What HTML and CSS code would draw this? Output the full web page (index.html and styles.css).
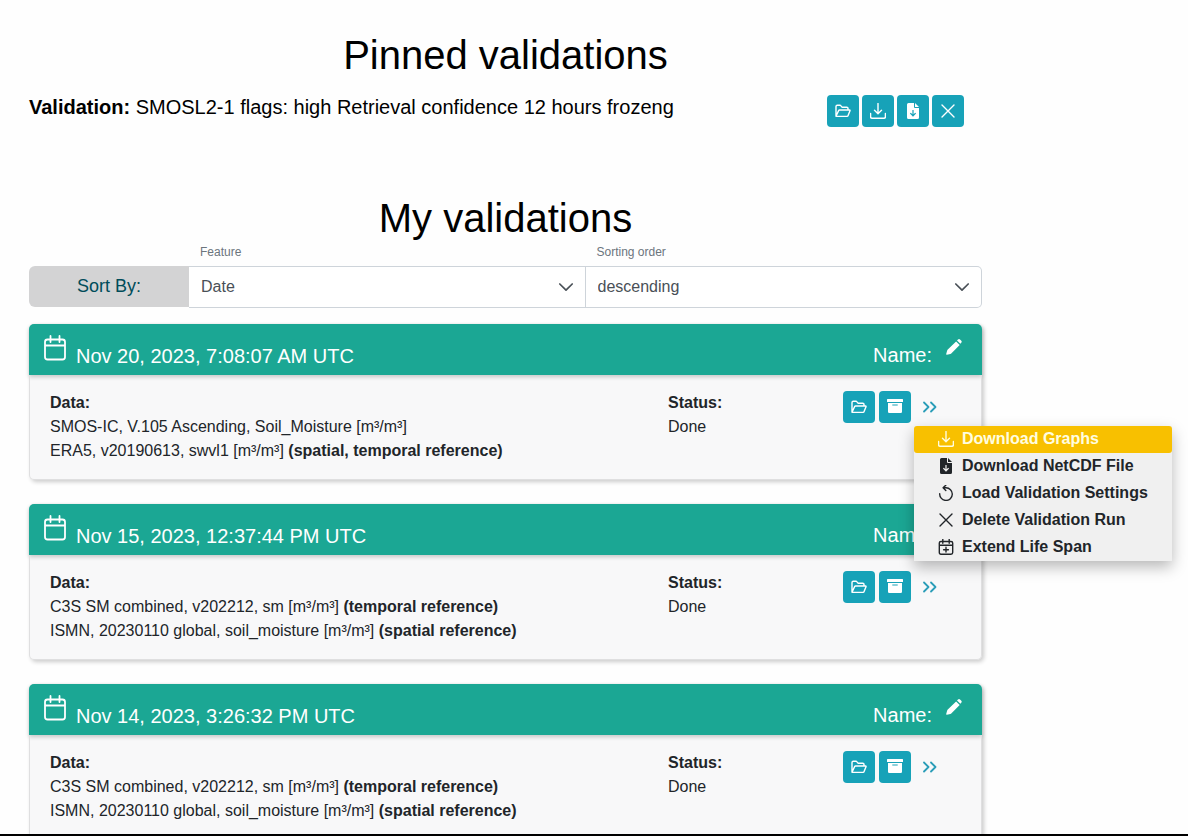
FILE: index.html
```html
<!DOCTYPE html>
<html lang="en">
<head>
<meta charset="utf-8">
<title>My validations</title>
<link rel="stylesheet" href="styles.css">
</head>
<body>
<svg class="sprite" aria-hidden="true">
  <symbol id="folder" viewBox="0 0 16 16"><path d="M1 13V3.5Q1 2.2 2.3 2.2h2.5q.8 0 1.2.6l1 1.4h4.7Q13 4.200 13 5.500V7M1 13.300 3.600 7.600q.3-.6 1-.6h9.900q.8 0 .5.8l-2 5q-.2.6-.9.6H1.600Q1 13.400 1 13z"/></symbol>
  <symbol id="download" viewBox="0 0 16 16"><path d="M8 .5v10M4.500 7.200 8 10.700l3.500-3.500M.6 10.500v3.300q0 1.500 1.500 1.500h11.800q1.500 0 1.500-1.500v-3.300"/></symbol>
  <symbol id="file" viewBox="0 0 16 16"><path class="solid" d="M3.500 0H9v4q0 1 1 1h4v9.500q0 1.500-1.500 1.500h-9Q2 16 2 14.500v-13Q2 0 3.500 0zM10 0l4 4h-4zM7.400 7v4.300L5.800 9.700l-.9.9L8 13.700l3.100-3.100-.9-.9-1.600 1.600V7z"/></symbol>
  <symbol id="close" viewBox="0 0 16 16"><path d="m2 2 12 12M14 2 2 14"/></symbol>
  <symbol id="archive" viewBox="0 0 16 16"><path class="solid" fill-rule="evenodd" d="M.6 0h14.800q.6 0 .6.6v2.400H0V.6Q0 0 .6 0zM1 4h14v8.800q0 1.200-1.200 1.200H2.200Q1 14 1 12.800zM5.300 5.500v1.100h5.400V5.500z"/></symbol>
  <symbol id="calendar" viewBox="0 0 24 26"><path d="M4.500 4.500h15q2.500 0 2.500 2.500v15q0 2.500-2.500 2.500h-15Q2 24.500 2 22V7q0-2.500 2.500-2.500zM2 10.500h20M7.500 1v6M16.500 1v6"/></symbol>
  <symbol id="pencil" viewBox="0 0 16 16"><path class="solid" d="M10.100 2.400 1.800 10.500Q1.300 11 1.100 11.700L.2 15q-.2.800.7.700l3.400-.8q.7-.2 1.200-.7l8.200-8.200zM11 1.600l1-1q1-.9 2-.1l1.300 1.300q.9 1-.1 2l-.8.9z"/></symbol>
  <symbol id="more" viewBox="0 0 16 16"><path d="m2 3.500 4.500 4.500L2 12.500M9 3.500 13.500 8 9 12.500"/></symbol>
  <symbol id="reload" viewBox="0 0 16 16"><path d="M1.700 8.800A6.300 6.300 0 1 0 8 2.800H5.300M7.800.2 5.100 2.800l2.700 2.700"/></symbol>
  <symbol id="extend" viewBox="0 0 16 16"><path d="M3 2.500h10q1.700 0 1.700 1.500v9.500q0 1.700-1.700 1.700H3q-1.700 0-1.700-1.700V4Q1.300 2.500 3 2.500zM1.300 6.300h13.400M4.800.3v4M11.200.3v4M8 8.300v4.800M5.600 10.700h4.800"/></symbol>
  <symbol id="down" viewBox="0 0 16 16"><path d="m1.800 5 6.200 6.200L14.200 5"/></symbol>
</svg>

<main class="page">
  <section class="pinned">
    <h1 class="title">Pinned validations</h1>
    <div class="pinned-row">
      <p class="pinned-name"><b>Validation:</b> SMOSL2-1 flags: high Retrieval confidence 12 hours frozeng</p>
      <div class="pinned-actions">
        <button class="btn" aria-label="Open"><svg class="icon"><use href="#folder"/></svg></button>
        <button class="btn" aria-label="Download graphs"><svg class="icon"><use href="#download"/></svg></button>
        <button class="btn" aria-label="Download NetCDF file"><svg class="icon"><use href="#file"/></svg></button>
        <button class="btn" aria-label="Unpin"><svg class="icon"><use href="#close"/></svg></button>
      </div>
    </div>
  </section>

  <section class="mine">
    <h1 class="title">My validations</h1>
    <div class="sort">
      <div class="sort-title">Sort By:</div>
      <div class="field">
        <label class="field-label" for="feature">Feature</label>
        <div class="select-wrap">
          <select class="select" id="feature"><option>Date</option><option>Name</option></select>
          <svg class="icon arrow"><use href="#down"/></svg>
        </div>
      </div>
      <div class="field last">
        <label class="field-label" for="order">Sorting order</label>
        <div class="select-wrap">
          <select class="select" id="order"><option>descending</option><option>ascending</option></select>
          <svg class="icon arrow"><use href="#down"/></svg>
        </div>
      </div>
    </div>

    <article class="card">
      <header class="card-head">
        <svg class="icon calendar"><use href="#calendar"/></svg>
        <h2 class="date">Nov 20, 2023, 7:08:07 AM UTC</h2>
        <span class="name">Name:</span>
        <button class="edit" aria-label="Edit name"><svg class="icon"><use href="#pencil"/></svg></button>
      </header>
      <div class="card-body">
        <div class="data"><b>Data:</b><br>SMOS-IC, V.105 Ascending, Soil_Moisture [m³/m³]<br>ERA5, v20190613, swvl1 [m³/m³] <b>(spatial, temporal reference)</b></div>
        <div class="status"><b>Status:</b><br>Done</div>
        <div class="actions">
          <button class="btn" aria-label="Open"><svg class="icon"><use href="#folder"/></svg></button>
          <button class="btn" aria-label="Archive"><svg class="icon"><use href="#archive"/></svg></button>
          <div class="more-wrap">
            <button class="more" aria-label="More actions" aria-expanded="true"><svg class="icon"><use href="#more"/></svg></button>
            <div class="menu">
              <button class="menu-item active"><svg class="icon"><use href="#download"/></svg>Download Graphs</button>
              <button class="menu-item"><svg class="icon"><use href="#file"/></svg>Download NetCDF File</button>
              <button class="menu-item"><svg class="icon"><use href="#reload"/></svg>Load Validation Settings</button>
              <button class="menu-item"><svg class="icon"><use href="#close"/></svg>Delete Validation Run</button>
              <button class="menu-item"><svg class="icon"><use href="#extend"/></svg>Extend Life Span</button>
            </div>
          </div>
        </div>
      </div>
    </article>

    <article class="card">
      <header class="card-head">
        <svg class="icon calendar"><use href="#calendar"/></svg>
        <h2 class="date">Nov 15, 2023, 12:37:44 PM UTC</h2>
        <span class="name">Name:</span>
        <button class="edit" aria-label="Edit name"><svg class="icon"><use href="#pencil"/></svg></button>
      </header>
      <div class="card-body">
        <div class="data"><b>Data:</b><br>C3S SM combined, v202212, sm [m³/m³] <b>(temporal reference)</b><br>ISMN, 20230110 global, soil_moisture [m³/m³] <b>(spatial reference)</b></div>
        <div class="status"><b>Status:</b><br>Done</div>
        <div class="actions">
          <button class="btn" aria-label="Open"><svg class="icon"><use href="#folder"/></svg></button>
          <button class="btn" aria-label="Archive"><svg class="icon"><use href="#archive"/></svg></button>
          <button class="more" aria-label="More actions"><svg class="icon"><use href="#more"/></svg></button>
        </div>
      </div>
    </article>

    <article class="card">
      <header class="card-head">
        <svg class="icon calendar"><use href="#calendar"/></svg>
        <h2 class="date">Nov 14, 2023, 3:26:32 PM UTC</h2>
        <span class="name">Name:</span>
        <button class="edit" aria-label="Edit name"><svg class="icon"><use href="#pencil"/></svg></button>
      </header>
      <div class="card-body">
        <div class="data"><b>Data:</b><br>C3S SM combined, v202212, sm [m³/m³] <b>(temporal reference)</b><br>ISMN, 20230110 global, soil_moisture [m³/m³] <b>(spatial reference)</b></div>
        <div class="status"><b>Status:</b><br>Done</div>
        <div class="actions">
          <button class="btn" aria-label="Open"><svg class="icon"><use href="#folder"/></svg></button>
          <button class="btn" aria-label="Archive"><svg class="icon"><use href="#archive"/></svg></button>
          <button class="more" aria-label="More actions"><svg class="icon"><use href="#more"/></svg></button>
        </div>
      </div>
    </article>
  </section>
</main>
</body>
</html>
```

FILE: styles.css
```css
* { box-sizing: border-box; }

body {
  margin: 0;
  background: #fefefe;
  color: #212529;
  font: 16px/24px "Liberation Sans", Arial, sans-serif;
}

button {
  margin: 0;
  padding: 0;
  border: 0;
  background: none;
  color: inherit;
  font: inherit;
  cursor: pointer;
}

.sprite { position: absolute; width: 0; height: 0; }

.page {
  height: 100vh;
  padding: 31px 206px 0 29px;
  overflow-y: auto;
  scrollbar-width: none;
  border-bottom: 2px solid #000;
}

.icon {
  display: block;
  flex: none;
  width: 16px;
  height: 16px;
  fill: none;
  stroke: currentColor;
  stroke-width: 1.4;
  stroke-linecap: round;
  stroke-linejoin: round;
}
.solid { fill: currentColor; fill-rule: evenodd; stroke: none; }

.title {
  margin: 0;
  color: #000;
  font-size: 40px;
  font-weight: 400;
  line-height: 48px;
  text-align: center;
}

.pinned { margin-bottom: 67px; }
.pinned-row {
  display: flex;
  justify-content: space-between;
  padding: 16px 18px 0 0;
}
.pinned-name { margin: 0; color: #000; font-size: 20px; }
.pinned-actions { display: flex; gap: 3px; }

.btn {
  display: flex;
  align-items: center;
  justify-content: center;
  width: 32px;
  height: 32px;
  border-radius: 4px;
  background: #17a2b8;
  color: #fff;
}

.sort {
  display: grid;
  grid-template-columns: 160px 1fr 1fr;
  align-items: end;
  margin-bottom: 16px;
}
.sort-title {
  height: 41px;
  margin-bottom: 1px;
  border-radius: 6px 0 0 6px;
  background: #d3d3d4;
  color: #004c5a;
  font-size: 18px;
  line-height: 41px;
  text-align: center;
}
.field-label {
  display: block;
  padding: 1px 11px 5px;
  color: #6c757d;
  font-size: 12px;
  line-height: 18px;
}
.select-wrap { position: relative; }
.select {
  display: block;
  width: 100%;
  height: 42px;
  padding: 0 40px 0 12px;
  appearance: none;
  border: 1px solid #ced4da;
  border-left-width: 0;
  border-radius: 0;
  background: #fff;
  color: #495057;
  font: inherit;
}
.last .select { border-radius: 0 5px 5px 0; }
.arrow {
  position: absolute;
  top: 13px;
  right: 12px;
  color: #495057;
  stroke-width: 1.7;
  pointer-events: none;
}

.card {
  margin-bottom: 24px;
  border-radius: 5px;
  background: #f8f8f9;
  box-shadow: 2px 2px 4px rgba(0, 0, 0, 0.2);
}
.card-head {
  display: flex;
  height: 51px;
  padding: 11px 20px 0 14px;
  border-radius: 5px 5px 0 0;
  background: #1ba794;
  box-shadow: 0 2px 4px rgba(0, 0, 0, 0.2);
  color: #fff;
  font-size: 20px;
}
.calendar { width: 24px; height: 26px; stroke-width: 1.8; }
.date {
  flex: 1;
  margin: 0;
  padding: 9px 0 0 9px;
  font-size: 20px;
  font-weight: 400;
}
.name { padding: 8px 14px 0 0; }
.edit { align-self: flex-start; padding-top: 4px; }

.card-body {
  display: grid;
  grid-template-columns: 1fr 175px 119px;
  padding: 16px 19px 16px 20px;
  border: 1px solid #dfdfe0;
  border-top: 0;
  border-radius: 0 0 5px 5px;
}
.actions { display: flex; align-items: flex-start; gap: 4px; }
.more-wrap { position: relative; }
.more {
  display: flex;
  align-items: center;
  justify-content: center;
  width: 30px;
  height: 32px;
  color: #2a9db8;
}
.more .icon { stroke-width: 1.8; }

.menu {
  position: absolute;
  z-index: 2;
  top: 35px;
  left: -1px;
  width: 258px;
  background: #f0f0f0;
  box-shadow: 0 6px 14px rgba(0, 0, 0, 0.28);
}
.menu-item {
  display: flex;
  align-items: center;
  gap: 8px;
  width: 100%;
  height: 27px;
  padding: 0 0 2px 24px;
  font-weight: 700;
  white-space: nowrap;
}
.menu-item.active { border-radius: 3px; background: #f8c000; color: #fffde0; }
```
